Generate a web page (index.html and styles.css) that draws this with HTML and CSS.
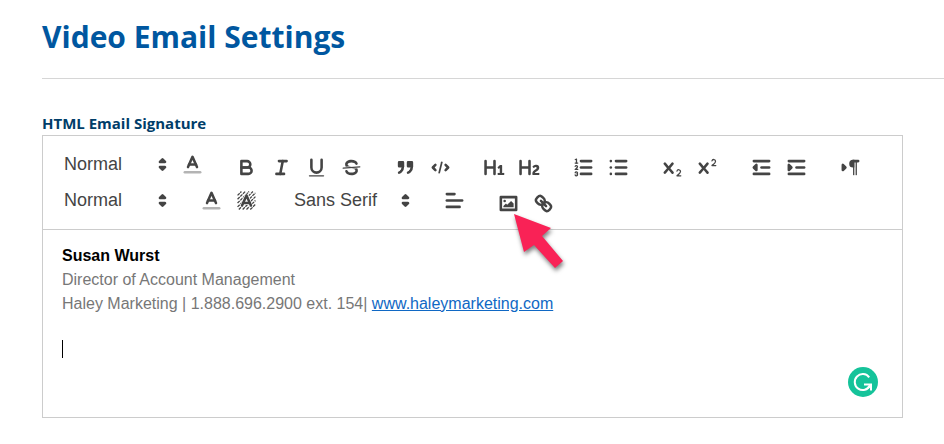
FILE: index.html
```html
<!DOCTYPE html>
<html lang="en">
<head>
    <meta charset="UTF-8">
    <meta name="viewport" content="width=device-width, initial-scale=1.0">
    <title>Video Email Settings</title>
    <link rel="stylesheet" href="styles.css">
</head>
<body>
    <header class="page-header">
        <h1>Video Email Settings</h1>
    </header>

    <main class="settings">
        <div class="field-label" id="signatureLabel">HTML Email Signature</div>

        <div class="editor">
            <div class="toolbar" role="toolbar" aria-label="Formatting">
                <div class="toolbar-row">
                    <div class="group pickers">
                        <div class="picker">
                            <select aria-label="Heading"><option>Normal</option><option>Heading 1</option><option>Heading 2</option></select>
                            <svg viewBox="0 0 18 18"><polygon class="both" points="7 11 9 13 11 11 7 11"/><polygon class="both" points="7 7 9 5 11 7 7 7"/></svg>
                        </div>
                        <button type="button" aria-label="Text color"><svg viewBox="0 0 18 18"><line class="faded" x1="3" x2="15" y1="15" y2="15"/><polyline points="5.5 11 9 3 12.5 11"/><line x1="11.63" x2="6.38" y1="9" y2="9"/></svg></button>
                    </div>
                    <div class="group">
                        <button type="button" aria-label="Bold"><svg viewBox="0 0 18 18"><path d="M5,4H9.5A2.5,2.5,0,0,1,12,6.5v0A2.5,2.5,0,0,1,9.5,9H5Z"/><path d="M5,9h5.5A2.5,2.5,0,0,1,13,11.5v0A2.5,2.5,0,0,1,10.5,14H5Z"/></svg></button>
                        <button type="button" aria-label="Italic"><svg viewBox="0 0 18 18"><line x1="7" x2="13" y1="4" y2="4"/><line x1="5" x2="11" y1="14" y2="14"/><line x1="8" x2="10" y1="14" y2="4"/></svg></button>
                        <button type="button" aria-label="Underline"><svg viewBox="0 0 18 18"><path d="M5,3V9a4.012,4.012,0,0,0,4,4H9a4.012,4.012,0,0,0,4-4V3"/><rect class="fill" height="1" rx="0.5" ry="0.5" width="12" x="3" y="15"/></svg></button>
                        <button type="button" aria-label="Strikethrough"><svg viewBox="0 0 18 18"><line class="thin" x1="15.5" x2="2.5" y1="8.5" y2="9.5"/><path class="fill" d="M9.007,8C6.542,7.791,6,7.519,6,6.5,6,5.792,7.283,5,9,5c1.571,0,2.765.679,2.969,1.309a1,1,0,0,0,1.9-.617C13.356,4.106,11.354,3,9,3,6.2,3,4,4.538,4,6.5a3.2,3.2,0,0,0,.5,1.843Z"/><path class="fill" d="M8.984,10C11.457,10.208,12,10.479,12,11.5c0,.708-1.283,1.5-3,1.5-1.571,0-2.765-.679-2.969-1.309a1,1,0,1,0-1.9.617C4.644,13.894,6.646,15,9,15c2.8,0,5-1.538,5-3.5a3.2,3.2,0,0,0-.5-1.843Z"/></svg></button>
                    </div>
                    <div class="group">
                        <button type="button" aria-label="Quote"><svg viewBox="0 0 18 18"><rect class="both" height="3" width="3" x="4" y="5"/><rect class="both" height="3" width="3" x="11" y="5"/><path class="both" d="M7,8c0,4.031-3,5-3,5"/><path class="both" d="M14,8c0,4.031-3,5-3,5"/></svg></button>
                        <button type="button" aria-label="Code"><svg viewBox="0 0 18 18"><polyline points="5 7 3 9 5 11"/><polyline points="13 7 15 9 13 11"/><line x1="10" x2="8" y1="5" y2="13" class="slash"/></svg></button>
                    </div>
                    <div class="group">
                        <button type="button" aria-label="Heading 1"><svg viewBox="0 0 18 18"><path class="fill" d="M10,4V14a1,1,0,0,1-2,0V10H3v4a1,1,0,0,1-2,0V4A1,1,0,0,1,3,4V8H8V4a1,1,0,0,1,2,0Zm6.06787,9.209H14.98975V7.59863a.54085.54085,0,0,0-.605-.60547h-.62744a1.01119,1.01119,0,0,0-.748.29688L11.645,8.56641a.5435.5435,0,0,0-.022.8584l.28613.30762a.53861.53861,0,0,0,.84717.0332l.09912-.08789a1.2137,1.2137,0,0,0,.2417-.35254h.02246s-.01123.30859-.01123.60547V13.209H12.041a.54085.54085,0,0,0-.605.60547v.43945a.54085.54085,0,0,0,.605.60547h4.02686a.54085.54085,0,0,0,.605-.60547v-.43945A.54085.54085,0,0,0,16.06787,13.209Z"/></svg></button>
                        <button type="button" aria-label="Heading 2"><svg viewBox="0 0 18 18"><path class="fill" d="M16.73975,13.81445v.43945a.54085.54085,0,0,1-.605.60547H11.855a.58392.58392,0,0,1-.64893-.60547V14.0127c0-2.90527,3.39941-3.42187,3.39941-4.55469a.77675.77675,0,0,0-.84717-.78125,1.17684,1.17684,0,0,0-.83594.38477c-.2749.26367-.561.374-.85791.13184l-.4292-.34082c-.30811-.24219-.38525-.51758-.1543-.81445a2.97155,2.97155,0,0,1,2.45361-1.17676,2.45393,2.45393,0,0,1,2.68408,2.40918c0,2.45312-3.1792,2.92676-3.27832,3.93848h2.79443A.54085.54085,0,0,1,16.73975,13.81445ZM9,3A.99974.99974,0,0,0,8,4V8H3V4A1,1,0,0,0,1,4V14a1,1,0,0,0,2,0V10H8v4a1,1,0,0,0,2,0V4A.99974.99974,0,0,0,9,3Z"/></svg></button>
                    </div>
                    <div class="group">
                        <button type="button" aria-label="Numbered list"><svg viewBox="0 0 18 18"><line x1="7" x2="15" y1="4" y2="4"/><line x1="7" x2="15" y1="9" y2="9"/><line x1="7" x2="15" y1="14" y2="14"/><line class="thin" x1="2.5" x2="4.5" y1="5.5" y2="5.5"/><path class="fill" d="M3.5,6A0.5,0.5,0,0,1,3,5.5V3.085l-0.276.138A0.5,0.5,0,0,1,2.053,3c-0.124-.247-0.023-0.324.224-0.447l1-.5A0.5,0.5,0,0,1,4,2.5v3A0.5,0.5,0,0,1,3.5,6Z"/><path class="thin" d="M4.5,10.5h-2c0-.234,1.85-1.076,1.85-2.234A0.959,0.959,0,0,0,2.5,8.156"/><path class="thin" d="M2.5,14.846a0.959,0.959,0,0,0,1.85-.109A0.7,0.7,0,0,0,3.75,14a0.688,0.688,0,0,0,.6-0.736,0.959,0.959,0,0,0-1.85-.109"/></svg></button>
                        <button type="button" aria-label="Bulleted list"><svg viewBox="0 0 18 18"><line x1="7" x2="15" y1="4" y2="4"/><line x1="7" x2="15" y1="9" y2="9"/><line x1="7" x2="15" y1="14" y2="14"/><line x1="3" x2="3" y1="4" y2="4"/><line x1="3" x2="3" y1="9" y2="9"/><line x1="3" x2="3" y1="14" y2="14"/></svg></button>
                    </div>
                    <div class="group">
                        <button type="button" aria-label="Subscript"><svg viewBox="0 0 18 18"><path class="fill" d="M15.5,15H13.861a3.858,3.858,0,0,0,1.914-2.975,1.8,1.8,0,0,0-1.6-1.751A1.921,1.921,0,0,0,12.021,11.7a0.50013,0.50013,0,1,0,.957.291h0a0.914,0.914,0,0,1,1.053-.725,0.81,0.81,0,0,1,.744.762c0,1.076-1.16971,1.86982-1.93971,2.43082A1.45639,1.45639,0,0,0,12,15.5a0.5,0.5,0,0,0,.5.5h3A0.5,0.5,0,0,0,15.5,15Z"/><path class="fill" d="M9.65,5.241a1,1,0,0,0-1.409.108L6,7.964,3.759,5.349A1,1,0,0,0,2.192,6.59178Q2.21541,6.6213,2.241,6.649L4.684,9.5,2.241,12.35A1,1,0,0,0,3.71,13.70722q0.02557-.02768.049-0.05722L6,11.036,8.241,13.65a1,1,0,1,0,1.567-1.24277Q9.78459,12.3777,9.759,12.35L7.316,9.5,9.759,6.651A1,1,0,0,0,9.65,5.241Z"/></svg></button>
                        <button type="button" aria-label="Superscript"><svg viewBox="0 0 18 18"><path class="fill" d="M15.5,7H13.861a4.015,4.015,0,0,0,1.914-2.975,1.8,1.8,0,0,0-1.6-1.751A1.922,1.922,0,0,0,12.021,3.7a0.5,0.5,0,1,0,.957.291,0.917,0.917,0,0,1,1.053-.725,0.81,0.81,0,0,1,.744.762c0,1.077-1.164,1.925-1.934,2.486A1.423,1.423,0,0,0,12,7.5a0.5,0.5,0,0,0,.5.5h3A0.5,0.5,0,0,0,15.5,7Z"/><path class="fill" d="M9.65,5.241a1,1,0,0,0-1.409.108L6,7.964,3.759,5.349A1,1,0,0,0,2.192,6.59178Q2.21541,6.6213,2.241,6.649L4.684,9.5,2.241,12.35A1,1,0,0,0,3.71,13.70722q0.02557-.02768.049-0.05722L6,11.036,8.241,13.65a1,1,0,1,0,1.567-1.24277Q9.78459,12.3777,9.759,12.35L7.316,9.5,9.759,6.651A1,1,0,0,0,9.65,5.241Z"/></svg></button>
                    </div>
                    <div class="group">
                        <button type="button" aria-label="Decrease indent"><svg viewBox="0 0 18 18"><line x1="3" x2="15" y1="14" y2="14"/><line x1="3" x2="15" y1="4" y2="4"/><line x1="9" x2="15" y1="9" y2="9"/><polyline class="both" points="5 7 5 11 3 9 5 7"/></svg></button>
                        <button type="button" aria-label="Increase indent"><svg viewBox="0 0 18 18"><line x1="3" x2="15" y1="14" y2="14"/><line x1="3" x2="15" y1="4" y2="4"/><line x1="9" x2="15" y1="9" y2="9"/><polyline class="both" points="3 7 3 11 5 9 3 7"/></svg></button>
                    </div>
                    <div class="group">
                        <button type="button" aria-label="Text direction"><svg viewBox="0 0 18 18"><polygon class="both" points="3 11 5 9 3 7 3 11"/><line x1="15" x2="11" y1="4" y2="4"/><path class="fill" d="M11,3a3,3,0,0,0,0,6h1V3H11Z"/><rect class="fill" height="11" width="1" x="11" y="4"/><rect class="fill" height="11" width="1" x="13" y="4"/></svg></button>
                    </div>
                </div>

                <div class="toolbar-row">
                    <div class="group pickers">
                        <div class="picker">
                            <select aria-label="Size"><option>Normal</option><option>Small</option><option>Large</option></select>
                            <svg viewBox="0 0 18 18"><polygon class="both" points="7 11 9 13 11 11 7 11"/><polygon class="both" points="7 7 9 5 11 7 7 7"/></svg>
                        </div>
                    </div>
                    <div class="group pickers">
                        <button type="button" aria-label="Font color"><svg viewBox="0 0 18 18"><line class="faded" x1="3" x2="15" y1="15" y2="15"/><polyline points="5.5 11 9 3 12.5 11"/><line x1="11.63" x2="6.38" y1="9" y2="9"/></svg></button>
                        <button type="button" aria-label="Background color"><svg viewBox="0 0 18 18"><path class="hatch" d="M2,5L5,2M2,8L8,2M2,11L11,2M2,14L14,2M3,16L16,3M6,16L16,6M9,16L16,9M12,16L16,12"/><path class="halo" d="M5.5,13L9,5L12.5,13M6.4,11H11.6"/><polyline points="5.5 13 9 5 12.5 13"/><line x1="11.63" x2="6.38" y1="11" y2="11"/></svg></button>
                    </div>
                    <div class="group pickers">
                        <div class="picker picker-font">
                            <select aria-label="Font"><option>Sans Serif</option><option>Serif</option><option>Monospace</option></select>
                            <svg viewBox="0 0 18 18"><polygon class="both" points="7 11 9 13 11 11 7 11"/><polygon class="both" points="7 7 9 5 11 7 7 7"/></svg>
                        </div>
                    </div>
                    <div class="group pickers">
                        <button type="button" aria-label="Align"><svg viewBox="0 0 18 18"><line x1="3" x2="15" y1="9" y2="9"/><line x1="3" x2="13" y1="14" y2="14"/><line x1="3" x2="9" y1="4" y2="4"/></svg></button>
                    </div>
                    <div class="group media">
                        <button type="button" aria-label="Insert image"><svg viewBox="0 0 18 18"><rect height="10" width="12" x="3" y="4"/><circle class="fill" cx="6" cy="7" r="1"/><polyline class="fill" points="5 12 5 11 7 9 8 10 11 7 13 9 13 12 5 12"/></svg></button>
                        <button type="button" aria-label="Insert link"><svg viewBox="0 0 18 18"><line x1="7" x2="11" y1="7" y2="11"/><path d="M8.9,4.577a3.476,3.476,0,0,1,.36,4.679A3.476,3.476,0,0,1,4.577,8.9C3.185,7.5,2.035,6.4,4.217,4.217S7.5,3.185,8.9,4.577Z"/><path d="M13.423,9.1a3.476,3.476,0,0,0-4.679-.36,3.476,3.476,0,0,0,.36,4.679c1.392,1.392,2.5,2.542,4.679.36S14.815,10.5,13.423,9.1Z"/></svg></button>
                        <!-- points at the image button -->
                        <svg class="pointer" viewBox="0 0 60 66" aria-hidden="true"><polygon points="4 4 41 18 32 26 53 51 45 58 24 35 14 42"/></svg>
                    </div>
                </div>
            </div>

            <div class="content" contenteditable="true" spellcheck="false" role="textbox" aria-multiline="true" aria-labelledby="signatureLabel">
                <p class="name">Susan Wurst</p>
                <p>Director of Account Management</p>
                <p>Haley Marketing | 1.888.696.2900 ext. 154| <a href="#">www.haleymarketing.com</a></p>
                <p><br></p>
                <p class="caret-line"><span class="caret"></span></p>
            </div>

            <button type="button" class="checker" aria-label="Check writing">
                <svg viewBox="0 0 30 30"><path d="M21.2 10.3A8 8 0 1 0 22 18.5"/><path d="M16 17.5H23V23.5"/><path d="M22.6 18L19.8 21"/></svg>
            </button>
        </div>
    </main>
</body>
</html>
```

FILE: styles.css
```css
* {
    box-sizing: border-box;
}

body {
    margin: 0;
    padding-left: 42px;
    background: #fff;
    font-family: "Open Sans", sans-serif;
}

.page-header {
    padding: 16px 0 20px;
    border-bottom: 1px solid #d6d6d6;
}

.page-header h1 {
    margin: 0;
    color: #0057a0;
    font-size: 30px;
    line-height: 42px;
    font-weight: 700;
}

.settings {
    padding: 34px 41px 26px 0;
}

.field-label {
    padding-bottom: 2px;
    color: #003d69;
    font-size: 15px;
    line-height: 20px;
    font-weight: 700;
}

.editor {
    position: relative;
    border: 1px solid #ccc;
    font-family: "Liberation Sans", Arial, sans-serif;
}

/* toolbar */
.toolbar {
    display: flex;
    flex-direction: column;
    gap: 3px;
    padding: 13px 10px 11px;
    border-bottom: 1px solid #ccc;
}

.toolbar-row {
    display: flex;
    align-items: flex-end;
    gap: 19px;
}

.group {
    display: flex;
}

.group.pickers {
    padding-bottom: 3px;
}

.toolbar button {
    width: 35px;
    height: 30px;
    padding: 4px 6px;
    border: none;
    background: none;
    cursor: pointer;
}

.toolbar svg {
    display: block;
    width: 23px;
    height: 23px;
    fill: none;
    stroke: #444;
    stroke-width: 2;
    stroke-linecap: round;
    stroke-linejoin: round;
}

.toolbar .fill {
    fill: #444;
    stroke: none;
}

.toolbar .both {
    fill: #444;
}

.toolbar .thin {
    stroke-width: 1;
}

.toolbar .slash {
    stroke-width: 1.4;
}

.toolbar .faded {
    opacity: 0.4;
}

.toolbar .hatch {
    stroke-width: 1;
    stroke-dasharray: 2.4 0.6;
    stroke-linecap: butt;
}

.toolbar .halo {
    stroke: #fff;
    stroke-width: 3;
}

.picker {
    position: relative;
    width: 122px;
}

.picker-font {
    width: 135px;
}

.picker select {
    width: 100%;
    height: 30px;
    padding: 0 11px;
    border: none;
    background: none;
    appearance: none;
    color: #444;
    font-family: inherit;
    font-size: 18px;
}

.picker svg {
    position: absolute;
    top: 4px;
    right: 1px;
    pointer-events: none;
}

.media {
    position: relative;
}

.toolbar .pointer {
    position: absolute;
    top: 22px;
    left: 19px;
    width: 60px;
    height: 66px;
    fill: #f92256;
    stroke: none;
    filter: drop-shadow(1px 3px 2px rgba(0, 0, 0, 0.5));
    pointer-events: none;
}

/* signature text */
.content {
    min-height: 187px;
    padding: 14px 19px;
    color: #777;
    font-size: 16px;
    line-height: 24px;
    outline: none;
}

.content p {
    margin: 0;
}

.content .name {
    color: #000;
    font-weight: 700;
}

.content a {
    color: #1068c4;
}

.caret-line {
    display: flex;
    height: 18px;
}

.caret {
    width: 1px;
    background: #000;
}

.checker {
    position: absolute;
    right: 24px;
    bottom: 20px;
    width: 30px;
    height: 30px;
    padding: 0;
    border: none;
    border-radius: 50%;
    background: #15c39a;
    cursor: pointer;
}

.checker svg {
    display: block;
    fill: none;
    stroke: #fff;
    stroke-width: 2;
}
```
